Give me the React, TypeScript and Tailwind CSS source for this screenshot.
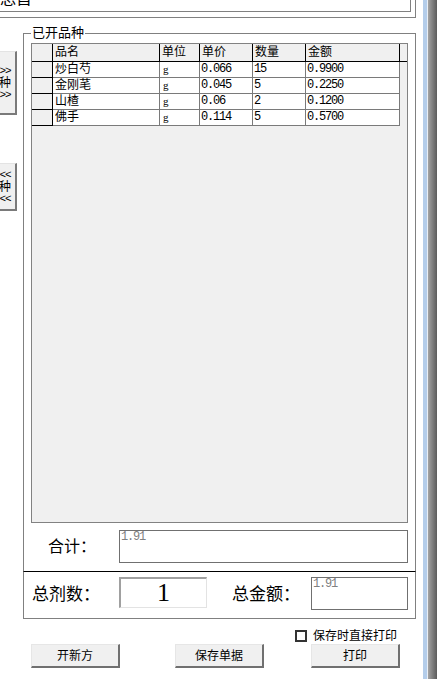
const rows = [
  { name: '炒白芍', unit: 'g', price: '0.066', qty: '15', amount: '0.9900' },
  { name: '金刚芼', unit: 'g', price: '0.045', qty: '5', amount: '0.2250' },
  { name: '山楂', unit: 'g', price: '0.06', qty: '2', amount: '0.1200' },
  { name: '佛手', unit: 'g', price: '0.114', qty: '5', amount: '0.5700' },
];

const cjk = "font-['Liberation_Sans','Noto_Sans_CJK_SC',sans-serif]";
const mono = "font-['Liberation_Mono',monospace] tracking-[-1.2px]";

function SideButton({ arrow, className }: { arrow: string; className: string }) {
  return (
    <div className={`-ml-[5px] w-[22px] flex flex-col items-center justify-center bg-[#f0f0f0] border-t border-[#e3e3e3] border-r-2 border-b-2 border-r-[#7a7a7a] border-b-[#7a7a7a] text-[11px] leading-[12px] text-black ${className}`}>
      <span className={mono}>{arrow}</span>
      <span className="text-[12px]">种</span>
      <span className={mono}>{arrow}</span>
    </div>
  );
}

function Button({ label, className = '' }: { label: string; className?: string }) {
  return (
    <div className={`w-[89px] h-[24px] flex items-center justify-center bg-[#f0f0f0] border-t border-l border-[#e6e6e6] border-r-2 border-b-2 border-r-[#707070] border-b-[#707070] text-[12px] text-black ${className}`}>
      {label}
    </div>
  );
}

export default function App() {
  return (
    <div className={`w-[437px] h-[679px] flex overflow-hidden bg-white text-black ${cjk}`}>
      <div className="w-[423px] flex flex-col">
        {/* top memo box, clipped */}
        <div className="w-[416px] h-[18px] border-r border-b border-[#808080]">
          <div className="w-[411px] h-[12px] border-r border-b border-[#808080] overflow-hidden">
            <div className="-mt-[10px] text-[16px] leading-[18px]">总首</div>
          </div>
        </div>

        <div className="flex">
          {/* side buttons */}
          <div className="w-[23px] flex flex-col overflow-hidden">
            <SideButton arrow=">>" className="mt-[33px] h-[64px]" />
            <SideButton arrow="<<" className="mt-[48px] h-[48px]" />
          </div>

          <div className="w-[393px] flex flex-col">
            {/* 已开品种 group */}
            <div className="relative mt-[15px] h-[539px] border border-[#808080] border-b-black pl-[7px] pt-[9px]">
              <span className="absolute -top-[9px] left-[7px] bg-white px-[1px] text-[13px] leading-[16px]">已开品种</span>
              <div className="w-[377px] h-[480px] border border-[#828282] bg-[#f0f0f0] text-[12px] leading-[15px]">
                <div className="flex h-[18px] border-b border-black">
                  <div className="w-[21px] border-r border-black" />
                  <div className="w-[107px] pl-[2px] pt-[1px] border-r border-black">品名</div>
                  <div className="w-[40px] pl-[2px] pt-[1px] border-r border-black">单位</div>
                  <div className="w-[53px] pl-[2px] pt-[1px] border-r border-black">单价</div>
                  <div className="w-[53px] pl-[2px] pt-[1px] border-r border-black">数量</div>
                  <div className="w-[94px] pl-[2px] pt-[1px] border-r border-black">金额</div>
                </div>
                {rows.map((r) => (
                  <div key={r.name} className="flex h-[16px]">
                    <div className="w-[21px] border-r border-b border-black" />
                    <div className="w-[107px] pl-[2px] bg-white border-r border-b border-[#7a7a7a]">{r.name}</div>
                    <div className="w-[40px] pl-[3px] bg-white border-r border-b border-[#7a7a7a] font-['Liberation_Serif',serif] text-[11px]">{r.unit}</div>
                    <div className={`w-[53px] pl-[1px] bg-white border-r border-b border-[#7a7a7a] ${mono}`}>{r.price}</div>
                    <div className={`w-[53px] pl-[1px] bg-white border-r border-b border-[#7a7a7a] ${mono}`}>{r.qty}</div>
                    <div className={`w-[94px] pl-[1px] bg-white border-r border-b border-[#7a7a7a] ${mono}`}>{r.amount}</div>
                  </div>
                ))}
              </div>

              <div className="flex mt-[7px] h-[32px]">
                <div className="w-[88px] pl-[17px] flex items-center text-[16px] leading-[18px] pt-[2px]">合计：</div>
                <div className="w-[289px] h-[33px] border border-[#707070] bg-white">
                  <div className={`pl-[1px] text-[12px] leading-[13px] text-[#808080] ${mono}`}>1.91</div>
                </div>
              </div>
            </div>

            {/* totals panel */}
            <div className="h-[47px] border-l border-r border-b border-[#808080] flex pt-[5px]">
              <div className="w-[95px] pl-[8px] pt-[8px] text-[17px] leading-[20px]">总剂数：</div>
              <div className="w-[88px] h-[31px] border-t-2 border-l-2 border-[#a0a0a0] border-r border-b border-r-[#e3e3e3] border-b-[#e3e3e3] bg-white flex items-center justify-center font-['Liberation_Serif',serif] text-[26px] leading-[26px]">
                1
              </div>
              <div className="w-[104px] pl-[25px] pt-[8px] text-[17px] leading-[20px]">总金额：</div>
              <div className="w-[97px] h-[33px] border border-[#707070] bg-white">
                <div className={`pl-[1px] text-[12px] leading-[13px] text-[#808080] ${mono}`}>1.91</div>
              </div>
            </div>
          </div>
        </div>

        {/* bottom actions */}
        <div className="flex items-center h-[14px] mt-[10px] pl-[295px]">
          <div className="w-[12px] h-[12px] border-2 border-[#333333] bg-white" />
          <span className="ml-[6px] text-[12px] leading-[14px]">保存时直接打印</span>
        </div>
        <div className="flex mt-[1px] pl-[31px]">
          <Button label="开新方" />
          <Button label="保存单据" className="ml-[55px]" />
          <Button label="打印" className="ml-[47px]" />
        </div>
      </div>

      {/* window edge */}
      <div className="w-[14px] flex">
        <div className="w-[4px] bg-[#b4cdea]" />
        <div className="w-[1px] bg-[#e9eef5]" />
        <div className="flex-1 bg-gradient-to-r from-[#a4a4a4] to-[#5c5c5c]" />
      </div>
    </div>
  );
}
